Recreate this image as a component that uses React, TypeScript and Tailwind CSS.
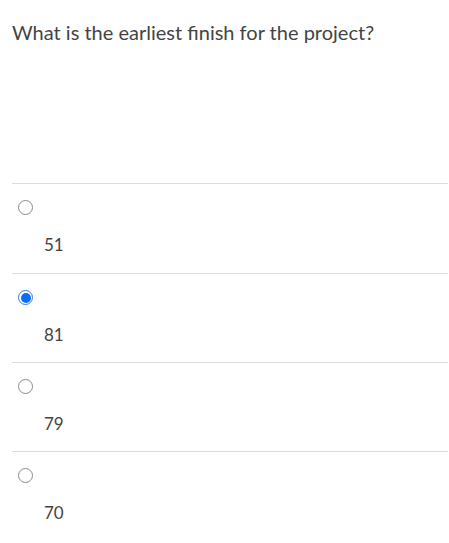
const options = [
  { value: "51", checked: false },
  { value: "81", checked: true },
  { value: "79", checked: false },
  { value: "70", checked: false },
];

const Radio = ({ checked }: { checked: boolean }) => {
  if (checked) {
    return (
      <div className="w-[15px] h-[15px] rounded-full border border-[#2f7ae5] bg-white flex items-center justify-center">
        <div className="w-[10px] h-[10px] rounded-full bg-[#0b6cf5]" />
      </div>
    );
  }
  return <div className="w-[15px] h-[15px] rounded-full border border-[#8a8a8a] bg-white" />;
};

export default function App() {
  return (
    <div className="w-[449px] h-[543px] bg-white font-['Lato','Liberation_Sans',sans-serif] overflow-hidden">
      <div className="pl-[12px] pt-[18px] h-[183px]">
        <p className="text-[20px] leading-[28px] text-[#444]">What is the earliest finish for the project?</p>
      </div>
      <div className="pl-[12px] pr-[1px]">
        {options.map((o, i) => (
          <div key={o.value} className={i === 0 ? "h-[90px] border-t border-[#dcdcdc] flex flex-col" : "h-[89px] border-t border-[#dcdcdc] flex flex-col"}>
            <div className="pl-[6px] pt-[16px]">
              <Radio checked={o.checked} />
            </div>
            <div className="pl-[32px] pt-[17px] text-[17px] leading-[25px] text-[#444]">{o.value}</div>
          </div>
        ))}
      </div>
    </div>
  );
}
